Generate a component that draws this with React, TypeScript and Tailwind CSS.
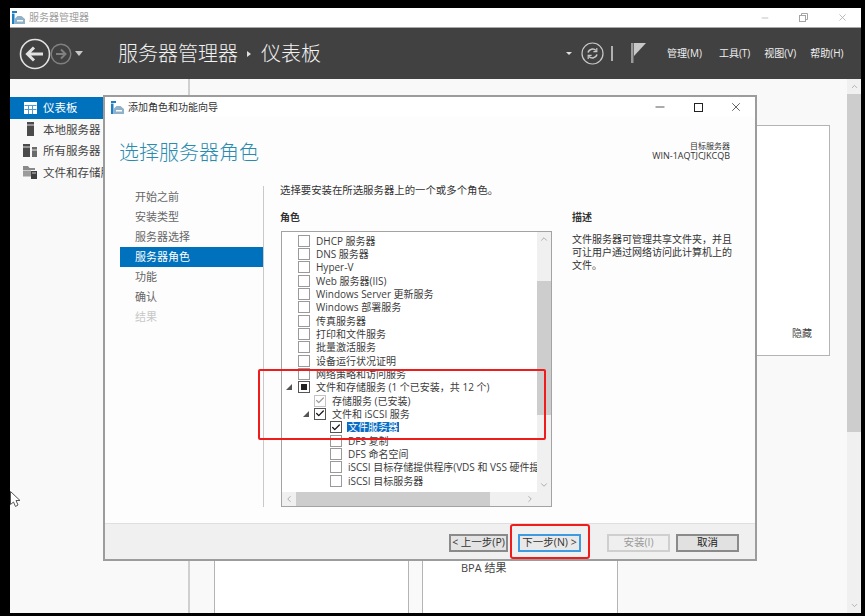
import { ChevronUp, ChevronDown, ChevronLeft, ChevronRight, Check, X, Minus } from "lucide-react";

const font = "font-['Open_Sans','Noto_Sans_CJK_SC',sans-serif]";

type Role = {
    label: string;
    level: number;
    state?: "checked" | "grey" | "partial";
    arrow?: boolean;
    selected?: boolean;
};

const roles: Role[] = [
    { label: "DHCP 服务器", level: 0 },
    { label: "DNS 服务器", level: 0 },
    { label: "Hyper-V", level: 0 },
    { label: "Web 服务器(IIS)", level: 0 },
    { label: "Windows Server 更新服务", level: 0 },
    { label: "Windows 部署服务", level: 0 },
    { label: "传真服务器", level: 0 },
    { label: "打印和文件服务", level: 0 },
    { label: "批量激活服务", level: 0 },
    { label: "设备运行状况证明", level: 0 },
    { label: "网络策略和访问服务", level: 0 },
    { label: "文件和存储服务 (1 个已安装，共 12 个)", level: 0, state: "partial", arrow: true },
    { label: "存储服务 (已安装)", level: 1, state: "grey" },
    { label: "文件和 iSCSI 服务", level: 1, state: "checked", arrow: true },
    { label: "文件服务器", level: 2, state: "checked", selected: true },
    { label: "DFS 复制", level: 2 },
    { label: "DFS 命名空间", level: 2 },
    { label: "iSCSI 目标存储提供程序(VDS 和 VSS 硬件提供程序)", level: 2 },
    { label: "iSCSI 目标服务器", level: 2 },
];

const steps = ["开始之前", "安装类型", "服务器选择", "服务器角色", "功能", "确认", "结果"];

const AppIcon = () => (
    <svg width="13" height="13" viewBox="0 0 13 13">
        <rect x="0" y="0" width="5" height="2" fill="#1d7fc4" />
        <rect x="0" y="2.6" width="2.5" height="10.4" fill="#1d7fc4" />
        <path d="M2.5 8 L5.5 5 H9.5 L13 8 V13 H2.5 Z" fill="#8fb2c9" />
        <rect x="5" y="9" width="6" height="1.5" fill="#ffffff" />
    </svg>
);

const DashIcon = () => (
    <svg width="13" height="12" viewBox="0 0 13 12">
        <rect width="13" height="12" fill="#ffffff" />
        <path d="M0.5 3.5 H12.5 M0.5 7.5 H12.5 M4.5 3 V12 M8.5 3 V12" stroke="#4d9ad4" strokeWidth="1" />
    </svg>
);

const LocalIcon = () => (
    <svg width="7" height="14" viewBox="0 0 7 14">
        <rect width="7" height="14" fill="#4b4b4b" />
        <rect x="0" y="2.5" width="7" height="1" fill="#dddddd" />
    </svg>
);

const AllIcon = () => (
    <svg width="14" height="13" viewBox="0 0 14 13">
        <rect width="7" height="13" fill="#4b4b4b" />
        <rect y="2.5" width="7" height="1" fill="#dddddd" />
        <rect x="9" y="3" width="5" height="10" fill="#6b6b6b" />
        <rect x="9" y="5.5" width="5" height="1" fill="#dddddd" />
    </svg>
);

const FilesIcon = () => (
    <svg width="14" height="13" viewBox="0 0 14 13">
        <path d="M0 0 H5 L6.5 2 H12 V4 H0 Z" fill="#8a8a8a" />
        <rect y="4.5" width="8" height="6" fill="#9c9c9c" />
        <rect x="8" y="5" width="6" height="8" fill="#3f3f3f" />
        <rect x="9" y="6.5" width="4" height="1" fill="#cccccc" />
    </svg>
);

const CheckBox = ({ state }: { state?: Role["state"] }) => (
    <span className={`flex h-[12px] w-[12px] shrink-0 items-center justify-center border bg-white ${state === "grey" ? "border-[#c4c4c4] bg-[#e8e8e8]" : state ? "border-[#555555]" : "border-[#9a9a9a]"}`}>
        {state === "partial" && <span className="h-[6px] w-[6px] bg-[#222222]" />}
        {state === "checked" && <Check className="h-[11px] w-[11px] text-[#111111]" strokeWidth={3} />}
        {state === "grey" && <Check className="h-[11px] w-[11px] text-[#9a9a9a]" strokeWidth={3} />}
    </span>
);

const RoleRow = ({ role }: { role: Role }) => (
    <div
        className={`relative flex h-[13.33px] items-center whitespace-nowrap text-[10px] leading-none text-[#3c3c3c] ${role.level === 0 ? "pl-[16px]" : role.level === 1 ? "pl-[32px]" : "pl-[48px]"}`}
    >
        <CheckBox state={role.state} />
        <span className={`ml-[5px] px-px ${role.selected ? "bg-[#0a6cc4] text-white" : ""}`}>{role.label}</span>
        {role.arrow && (
            <span
                className={`absolute h-0 w-0 border-b-[6px] border-l-[6px] border-b-[#555555] border-l-transparent ${role.level === 0 ? "left-[4px]" : "left-[21px]"}`}
            />
        )}
    </div>
);

const WinButton = ({ label, className }: { label: string; className: string }) => (
    <button className={`flex h-[18px] items-center justify-center border-2 text-[10.5px] leading-none ${className}`}>
        {label}
    </button>
);

const Dialog = () => (
    <div className="absolute left-[103px] top-[95px] flex h-[466px] w-[654px] flex-col border-2 border-[#9c9c9c] bg-[#fdfdfd]">
        <div className="flex h-[20px] shrink-0 items-center bg-white pl-[6px] pr-[12px]">
            <AppIcon />
            <span className="ml-[4px] text-[10px] text-[#333333]">添加角色和功能向导</span>
            <div className="ml-auto flex items-center gap-[26.5px] text-[#222222]">
                <Minus className="h-[14px] w-[14px]" strokeWidth={1.3} />
                <span className="h-[9px] w-[9px] border border-[#222222]" />
                <X className="h-[14px] w-[14px]" strokeWidth={1.2} />
            </div>
        </div>
        <div className="flex h-[69px] shrink-0 items-start justify-between pl-[14px] pr-[25px]">
            <h1 className="mt-[21px] text-[20px] font-light leading-[30px] text-[#2a8bb0]">选择服务器角色</h1>
            <div className="mt-[24px] text-right text-[9px] leading-[10px] text-[#333333]">
                <div className="text-[8px]">目标服务器</div>
                <div>WIN-1AQTJCJKCQB</div>
            </div>
        </div>
        <div className="flex min-h-0 flex-1">
            <div className="ml-[15px] w-[143px] shrink-0 pt-[1px]">
                {steps.map((step, i) => (
                    <div
                        key={step}
                        className={`flex h-[20px] items-center pl-[15px] text-[11px] ${i === 3 ? "bg-[#0071bc] text-white" : i === 6 ? "text-[#c8c8c8]" : "text-[#666666]"}`}
                    >
                        {step}
                    </div>
                ))}
            </div>
            <div className="flex h-[321px] flex-1 border-l border-[#c9c9c9] pl-[16px]">
                <div className="w-[272px] shrink-0">
                    <p className="-mt-px whitespace-nowrap text-[10.4px] leading-[11px] text-[#333333]">选择要安装在所选服务器上的一个或多个角色。</p>
                    <h2 className="mt-[15px] text-[10px] font-bold leading-[13px] text-[#333333]">角色</h2>
                    <div className="relative ml-px mt-[7px] flex h-[276px] w-[271px] flex-col border border-[#a3a3a3] bg-white">
                        <div className="flex min-h-0 flex-1">
                            <div className="min-w-0 flex-1 overflow-hidden pt-[2px]">
                                {roles.map((role) => (
                                    <RoleRow key={role.label} role={role} />
                                ))}
                            </div>
                            <div className="flex w-[14px] shrink-0 flex-col bg-[#f0f0f0]">
                                <div className="flex h-[14px] items-center justify-center">
                                    <ChevronUp className="h-[10px] w-[10px] text-[#a0a0a0]" />
                                </div>
                                <div className="mt-[35px] h-[134px] bg-[#cdcdcd]" />
                                <div className="mt-auto flex h-[14px] items-center justify-center">
                                    <ChevronDown className="h-[10px] w-[10px] text-[#a0a0a0]" />
                                </div>
                            </div>
                        </div>
                        <div className="flex h-[14px] shrink-0 bg-[#f0f0f0]">
                            <div className="flex w-[14px] items-center justify-center">
                                <ChevronLeft className="h-[10px] w-[10px] text-[#a0a0a0]" />
                            </div>
                            <div className="w-[194px] bg-[#cdcdcd]" />
                            <div className="ml-auto mr-[14px] flex w-[14px] items-center justify-center">
                                <ChevronRight className="h-[10px] w-[10px] text-[#a0a0a0]" />
                            </div>
                        </div>
                    </div>
                </div>
                <div className="ml-[20px] w-[164px] pt-[25px]">
                    <h2 className="text-[10px] font-bold leading-[13px] text-[#333333]">描述</h2>
                    <p className="mt-[9px] text-[10px] leading-[13px] text-[#333333]">文件服务器可管理共享文件夹，并且可让用户通过网络访问此计算机上的文件。</p>
                </div>
            </div>
        </div>
        <div className="flex h-[36px] shrink-0 items-center border-t border-[#dfdfdf] bg-[#f0f0f0] pl-[344px] pt-[2px]">
            <WinButton label="< 上一步(P)" className="w-[59px] border-[#8a8a8a] bg-[#e4e4e4] text-[#333333]" />
            <WinButton label="下一步(N) >" className="ml-[10px] w-[63px] border-[#3f9be0] bg-[#e9e9e9] text-[#333333]" />
            <WinButton label="安装(I)" className="ml-[26px] w-[63px] border-[#cfcfcf] bg-[#efefef] text-[#9a9a9a]" />
            <WinButton label="取消" className="ml-[6px] w-[63px] border-[#8a8a8a] bg-[#e1e1e1] text-[#222222]" />
        </div>
    </div>
);

const Sidebar = () => (
    <div className="w-[180px] shrink-0 border-r-2 border-[#d0d0d0] pt-[18px]">
        {[
            { label: "仪表板", icon: <DashIcon /> },
            { label: "本地服务器", icon: <LocalIcon /> },
            { label: "所有服务器", icon: <AllIcon /> },
            { label: "文件和存储服务", icon: <FilesIcon /> },
        ].map((item, i) => (
            <div
                key={item.label}
                className={`flex h-[21.5px] items-center text-[11.5px] ${i === 0 ? "bg-[#0071bc] text-white" : "text-[#444444]"}`}
            >
                <span className="flex w-[33px] justify-center pl-[7px]">{item.icon}</span>
                {item.label}
            </div>
        ))}
    </div>
);

export default function App() {
    return (
        <div className={`relative h-[616px] w-[865px] overflow-hidden bg-black pb-[3px] pl-[10px] pr-[4px] pt-[8px] ${font}`}>
            <div className="flex h-full flex-col">
                <div className="flex h-[20px] shrink-0 items-center border-b border-[#a8a8a8] bg-white pl-[2px] pr-[13px]">
                    <AppIcon />
                    <span className="ml-[4px] text-[10px] text-[#a0a0a0]">服务器管理器</span>
                    <div className="ml-auto flex items-center gap-[29px] text-[#b5b5b5]">
                        <Minus className="h-[10px] w-[10px]" />
                        <svg width="9" height="9" viewBox="0 0 9 9" fill="none" stroke="#a5a5a5">
                            <rect x="0.5" y="2.5" width="6" height="6" />
                            <path d="M2.5 2.5 V0.5 H8.5 V6.5 H6.5" />
                        </svg>
                        <X className="h-[11px] w-[11px]" />
                    </div>
                </div>
                <div className="flex h-[51px] shrink-0 items-center bg-[#414141] pl-[9px] text-white">
                    <svg width="32" height="32" viewBox="0 0 32 32" fill="none" stroke="#e2e2e2">
                        <circle cx="16" cy="16" r="14.5" strokeWidth="1.6" />
                        <path d="M24 16 H9 M15 9.5 L8.5 16 L15 22.5" strokeWidth="3" />
                    </svg>
                    <svg className="ml-[-1px]" width="22" height="22" viewBox="0 0 22 22" fill="none" stroke="#808080">
                        <circle cx="11" cy="11" r="9.8" strokeWidth="1.4" />
                        <path d="M6 11 H15 M11 6.5 L15.5 11 L11 15.5" strokeWidth="2" />
                    </svg>
                    <span className="ml-[3px] h-0 w-0 border-l-[4px] border-r-[4px] border-t-[5px] border-l-transparent border-r-transparent border-t-[#c8c8c8]" />
                    <span className="ml-[35px] text-[20px] font-light text-[#f2f2f2]">服务器管理器</span>
                    <span className="ml-[9px] h-0 w-0 border-b-[3px] border-l-[4px] border-t-[3px] border-b-transparent border-l-[#e0e0e0] border-t-transparent" />
                    <span className="ml-[10px] text-[20px] font-light text-[#f2f2f2]">仪表板</span>
                    <span className="ml-[245px] h-0 w-0 border-l-[3px] border-r-[3px] border-t-[3px] border-l-transparent border-r-transparent border-t-[#e0e0e0]" />
                    <svg className="ml-[9px]" width="23" height="23" viewBox="0 0 23 23" fill="none" stroke="#c8c8c8">
                        <circle cx="11.5" cy="11.5" r="10.5" strokeWidth="1.2" />
                        <path d="M7 10.5 A4.8 4.8 0 0 1 15 8.5 M16 12.5 A4.8 4.8 0 0 1 8 14.5" strokeWidth="1.6" />
                        <path d="M15.8 6 V9.6 H12.4 M7.2 17 V13.4 H10.6" strokeWidth="1.2" />
                    </svg>
                    <span className="ml-[7px] h-[15px] w-[2px] bg-[#b0b0b0]" />
                    <svg className="ml-[18px]" width="15" height="21" viewBox="0 0 15 21">
                        <rect x="0" y="0" width="2.5" height="20" fill="#9a9a9a" />
                        <path d="M3 0 H15 L3 13 Z" fill="#c8c8c8" />
                    </svg>
                    <div className="ml-[21px] flex whitespace-nowrap text-[10px] text-[#f0f0f0]">
                        <span>管理(M)</span>
                        <span className="ml-[17px]">工具(T)</span>
                        <span className="ml-[14px]">视图(V)</span>
                        <span className="ml-[14px]">帮助(H)</span>
                    </div>
                </div>
                <div className="flex min-h-0 flex-1 overflow-hidden bg-[#f9f9f9]">
                    <Sidebar />
                    <div className="min-w-0 flex-1 pl-[24px] pt-[46px] text-[#444444]">
                        <div className="flex h-[231px] w-[616px] items-end justify-end border border-[#b4b4b4] bg-white pb-[14px] pr-[17px] text-[10px]">
                            隐藏
                        </div>
                        <div className="mt-[14px] flex h-[300px] gap-[13px]">
                            <div className="w-[195px] border-x border-[#b4b4b4] bg-white" />
                            <div className="w-[196px] border-x border-[#b4b4b4] bg-white pl-[38px] pt-[190px] text-[11px]">
                                BPA 结果
                            </div>
                        </div>
                    </div>
                    <div className="flex w-[14px] shrink-0 flex-col bg-[#f0f0f0]">
                        <div className="flex h-[15px] items-center justify-center">
                            <ChevronUp className="h-[9px] w-[9px] text-[#a0a0a0]" />
                        </div>
                        <div className="h-[338px] bg-[#cdcdcd]" />
                        <div className="mt-auto flex h-[15px] items-center justify-center">
                            <ChevronDown className="h-[9px] w-[9px] text-[#a0a0a0]" />
                        </div>
                    </div>
                </div>
            </div>
            <Dialog />
            <svg className="absolute left-[10px] top-[491px]" width="11" height="17" viewBox="0 0 11 17">
                <path d="M0.5 0.5 L10 9.5 H6 L8 14 L5.5 15.5 L3.5 11 L0.5 13.5 Z" fill="#ffffff" stroke="#555555" strokeWidth="1" />
            </svg>
            <div className="absolute left-[258px] top-[369px] h-[71px] w-[288px] rounded-[2px] border-2 border-[#f01c1c]" />
            <div className="absolute left-[510px] top-[524px] h-[35px] w-[80px] rounded-[3px] border-2 border-[#f01c1c]" />
        </div>
    );
}
